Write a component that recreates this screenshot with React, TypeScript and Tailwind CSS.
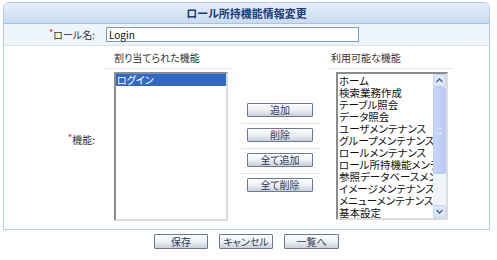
import React from 'react';

const available = [
  'ホーム',
  '検索業務作成',
  'テーブル照会',
  'データ照会',
  'ユーザメンテナンス',
  'グループメンテナンス',
  'ロールメンテナンス',
  'ロール所持機能メンテナンス',
  '参照データベースメンテナンス',
  'イメージメンテナンス',
  'メニューメンテナンス',
  '基本設定',
];

function Btn({ label, w }: { label: string; w: string }) {
  return (
    <button
      className={`${w} border border-[#6b7a92] rounded-[1px] bg-gradient-to-b from-white via-[#eef0f4] to-[#c9cfd9] text-[10px] leading-[12px] text-[#2a3b5a] flex items-center justify-center`}
    >
      {label}
    </button>
  );
}

function Req({ text }: { text: string }) {
  return (
    <span className="text-[10px] leading-[12px] text-[#333] inline-flex items-start">
      <span className="text-[#e01010] text-[9px] leading-[9px] mt-[-1px]">*</span>
      {text}
    </span>
  );
}

export default function App() {
  return (
    <div className="w-[497px] h-[260px] bg-white pt-[2px] pl-[3px] font-['Noto_Sans_CJK_JP','Noto_Sans',sans-serif] [font-feature-settings:'palt']">
      <div className="w-[487px] border border-[#b3cbe9] rounded-t-[6px] overflow-hidden">
        <div className="h-[21px] flex items-center justify-center bg-gradient-to-b from-[#e6eefa] to-[#c9dbf2] border-b border-[#a9c3e5]">
          <span className="text-[11px] font-bold text-[#1b3a76]">ロール所持機能情報変更</span>
        </div>

        <div className="h-[22px] flex items-center bg-[#eef5fd] border-b border-[#d7e3f3]">
          <div className="w-[91px] flex justify-end">
            <Req text="ロール名:" />
          </div>
          <div className="ml-[11px] w-[253px] h-[15px] border border-[#7f9db9] bg-white flex items-center pl-[2px] text-[10px] text-[#111]">
            Login
          </div>
        </div>

        <div className="h-[183px] flex">
          <div className="w-[99px] flex items-center justify-end pr-[8px] pt-[4px]">
            <Req text="機能:" />
          </div>

          <div className="w-[129px]">
            <div className="h-[23px] flex items-center pl-[11px] border-b border-[#e6e6e6] text-[10px] text-[#333]">
              割り当てられた機能
            </div>
            <div className="mt-[3px] ml-[11px] w-[114px] h-[149px] border-2 border-t-[#8c8c8c] border-l-[#8c8c8c] border-r-[#dcdcdc] border-b-[#dcdcdc] bg-white">
              <div className="h-[12px] bg-[#316ac5] text-white text-[10px] leading-[12px] pl-[1px]">ログイン</div>
            </div>
          </div>

          <div className="ml-[9px] w-[80px] pt-[57px]">
            {['追加', '削除', '全て追加', '全て削除'].map((l, i) => (
              <div
                key={l}
                className={`flex pl-[6px] ${i < 3 ? 'pb-[6px] border-b border-[#e4e4e4]' : ''} ${i > 0 ? 'pt-[4px]' : ''}`}
              >
                <Btn label={l} w="w-[66px] h-[14px]" />
              </div>
            ))}
          </div>

          <div className="ml-[8px] w-[124px]">
            <div className="h-[23px] flex items-center pl-[2px] border-b border-[#e6e6e6] text-[10px] text-[#333]">
              利用可能な機能
            </div>
            <div className="mt-[3px] ml-[7px] w-[112px] h-[148px] border-2 border-t-[#8c8c8c] border-l-[#8c8c8c] border-r-[#dcdcdc] border-b-[#dcdcdc] bg-white flex overflow-hidden">
              <div className="flex-1 min-w-0 overflow-hidden pt-[1px] pl-[1px]">
                {available.map((a) => (
                  <div key={a} className="h-[12px] text-[10.5px] leading-[12px] text-[#111] whitespace-nowrap">
                    {a}
                  </div>
                ))}
              </div>
              <div className="w-[13px] flex flex-col bg-[#f1f4fb]">
                <div className="h-[13px] flex items-center justify-center border border-[#c3d3f5] bg-[#dde7fb] rounded-[2px]">
                  <svg width="7" height="5" viewBox="0 0 7 5">
                    <path d="M0.5 4 L3.5 1 L6.5 4" fill="none" stroke="#4d6185" strokeWidth="1.3" />
                  </svg>
                </div>
                <div className="h-[87px] border border-[#b9cbf3] bg-gradient-to-r from-[#c7d6f8] to-[#b7caf5] rounded-[2px] flex items-center justify-center">
                  <div className="w-[5px] h-[6px] border-y border-[#e3eafb]"></div>
                </div>
                <div className="flex-1"></div>
                <div className="h-[13px] flex items-center justify-center border border-[#c3d3f5] bg-[#dde7fb] rounded-[2px]">
                  <svg width="7" height="5" viewBox="0 0 7 5">
                    <path d="M0.5 1 L3.5 4 L6.5 1" fill="none" stroke="#4d6185" strokeWidth="1.3" />
                  </svg>
                </div>
              </div>
            </div>
          </div>
        </div>
      </div>

      <div className="w-[487px] flex justify-center gap-[11px] mt-[4px]">
        <Btn label="保存" w="w-[54px] h-[15px]" />
        <Btn label="キャンセル" w="w-[54px] h-[15px]" />
        <Btn label="一覧へ" w="w-[55px] h-[15px]" />
      </div>
    </div>
  );
}
